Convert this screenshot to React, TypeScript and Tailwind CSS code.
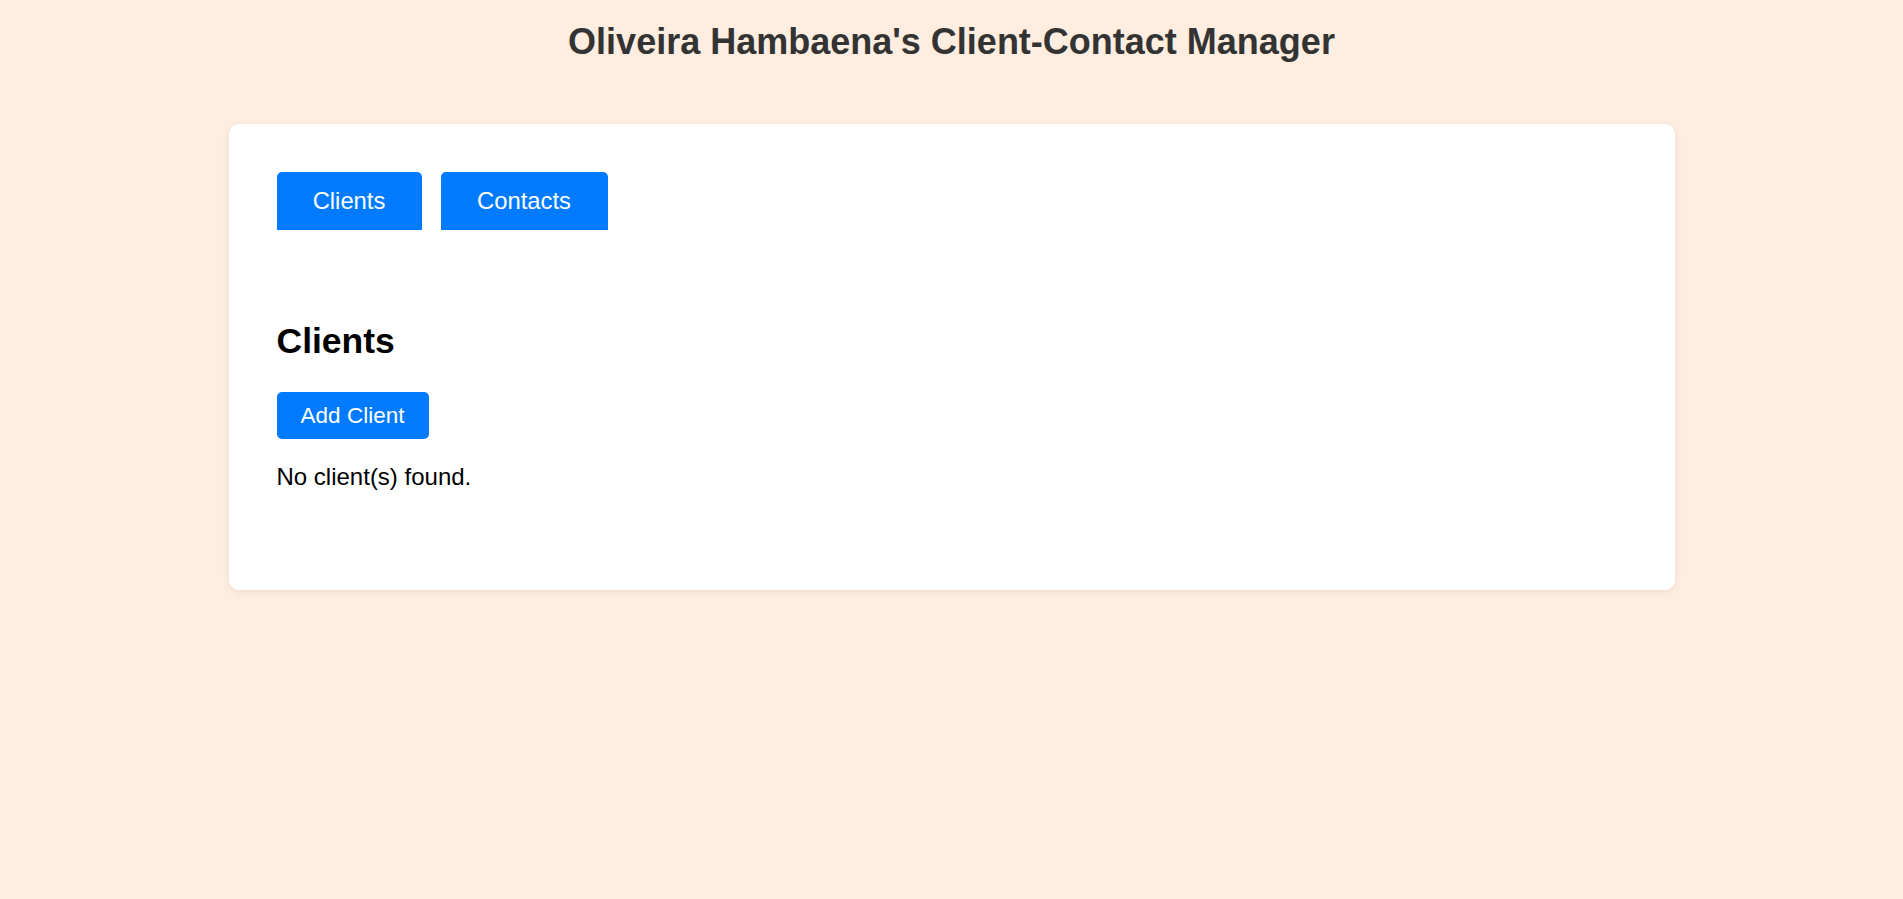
import React, { useState } from "react";

type Tab = "clients" | "contacts";

export default function App() {
  const [tab, setTab] = useState<Tab>("clients");

  return (
    <div className="min-h-screen bg-[#ffeddf] font-['Liberation_Sans',Arial,sans-serif]">
      <h1 className="pt-[22px] text-center text-[36px] leading-[40px] font-bold text-[#333333]">
        Oliveira Hambaena's Client-Contact Manager
      </h1>

      <div className="mx-auto mt-[62px] w-[1446px] rounded-[10px] bg-white p-12 pb-[99px] shadow-[0_2px_8px_rgba(0,0,0,0.08)]">
        <div className="flex gap-[19px]">
          <button
            onClick={() => setTab("clients")}
            className="h-[58px] w-[145px] rounded-t-[5px] bg-[#007bff] text-[23.8px] text-white"
          >
            Clients
          </button>
          <button
            onClick={() => setTab("contacts")}
            className="h-[58px] w-[167px] rounded-t-[5px] bg-[#007bff] text-[23.8px] text-white"
          >
            Contacts
          </button>
        </div>

        {tab === "clients" ? (
          <div>
            <h2 className="mt-[93px] text-[35.5px] leading-[36px] font-bold text-black">Clients</h2>
            <button className="mt-[33px] h-[47px] w-[152px] rounded-[5px] bg-[#007bff] text-[22.5px] text-white">
              Add Client
            </button>
            <p className="mt-[24px] text-[24px] leading-[28px] text-black">No client(s) found.</p>
          </div>
        ) : (
          <div>
            <h2 className="mt-[93px] text-[35.5px] leading-[36px] font-bold text-black">Contacts</h2>
            <button className="mt-[33px] h-[47px] rounded-[5px] bg-[#007bff] px-6 text-[22.5px] text-white">
              Add Contact
            </button>
            <p className="mt-[24px] text-[24px] leading-[28px] text-black">No contact(s) found.</p>
          </div>
        )}
      </div>
    </div>
  );
}
